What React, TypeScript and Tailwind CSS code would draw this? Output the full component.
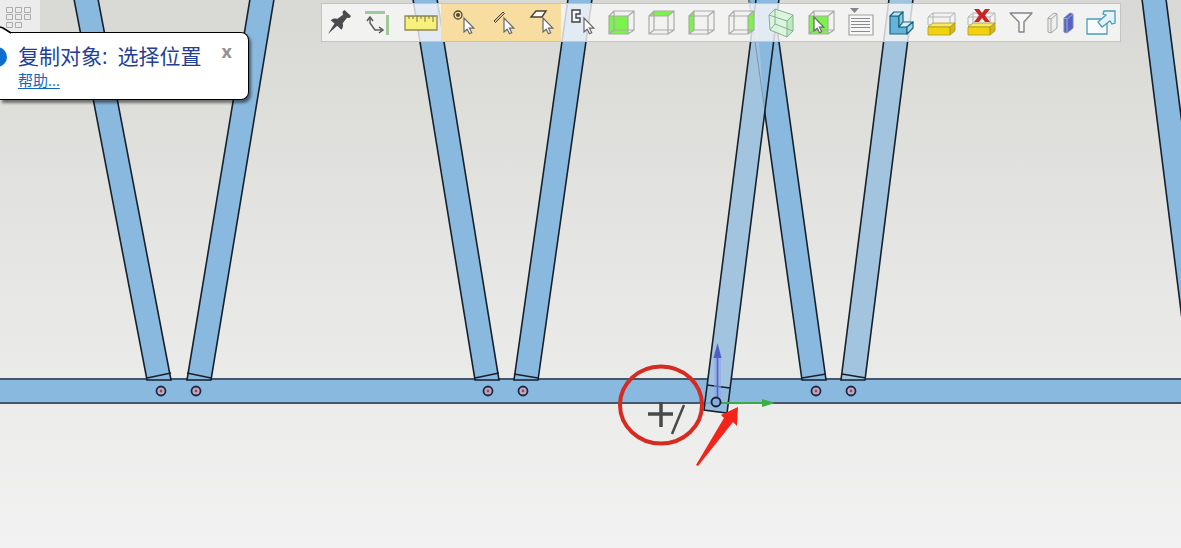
import type { ReactNode } from "react"

interface Tool {
  label: string
  icon: ReactNode
  active?: boolean
}

function Cursor({ x = 23, y = 15 }: { x?: number; y?: number }) {
  return (
    <path
      d={`M${x} ${y}v14l3.2-2.8 2.3 4.6 2.2-1.1-2.2-4.5h4.3z`}
      fill="#fdfdfd"
      stroke="#66666a"
      strokeWidth="1.2"
    />
  )
}

function Cube({ face }: { face: "front" | "top" | "left" | "right" }) {
  const faces = {
    front: "M8 13h19v18H8z",
    top: "M8 13l5-5h20l-6 5z",
    left: "M8 13l5-5v19l-5 4z",
    right: "M27 13l6-5v19l-6 4z",
  }
  return (
    <>
      <path d={faces[face]} fill="#7df24c" />
      <path
        d="M8 13h19v18H8zM13 8h20v19H13zM8 13l5-5M27 13l6-5M8 31l5-4M27 31l6-4"
        fill="none"
        stroke="#a9abaa"
        strokeWidth="1.2"
      />
    </>
  )
}

function YellowBox() {
  return (
    <>
      <path d="M7 14h22v8H7zM12 10h22v11H12zM7 14l5-4M29 14l5-4" fill="none" stroke="#b4b4b6" />
      <path d="M7 24l5-4h22l-5 4z" fill="#fbe95a" stroke="#a8992e" strokeWidth="0.8" />
      <path d="M7 24h22v8H7z" fill="#f2d20c" stroke="#a8992e" strokeWidth="0.8" />
      <path d="M29 24l5-4v8l-5 4z" fill="#d3b51a" stroke="#a8992e" strokeWidth="0.8" />
    </>
  )
}

const tools: Tool[] = [
  {
    label: "Pin toolbar",
    icon: (
      <path
        d="M7 31l6.5-10.5-3.8-3.3c2-1.6 4.4-2 6.5-1.2l5.8-4.2-.5-3L23.5 7l6.5 6-1.5 2-2.5-.2-4.3 5.500c.8 2 .3 4.6-1.3 6.5l-4.2-4z"
        fill="#4b4b4d"
      />
    ),
  },
  {
    label: "Orient axes",
    icon: (
      <>
        <path d="M4 8h20v3H4zM25 12h3v20h-3z" fill="#9ccb98" />
        <path d="M9 15v5l5 7h7" fill="none" stroke="#5f5f62" strokeWidth="1.5" strokeLinejoin="round" />
        <path d="M6 18l3-4 3 4M18 24l4 3-4 3" fill="none" stroke="#555558" strokeWidth="1.5" />
      </>
    ),
  },
  {
    label: "Measure",
    icon: (
      <>
        <path d="M4 13h32v14H4z" fill="#f8ef7c" stroke="#8e8954" strokeWidth="1.3" />
        <path d="M8 13v3M12 13v3M16 13v6M20 13v3M24 13v6M28 13v3M32 13v6" stroke="#77744a" />
      </>
    ),
  },
  {
    label: "Select points",
    active: true,
    icon: (
      <>
        <circle cx="17" cy="12" r="4" fill="none" stroke="#4d4638" strokeWidth="1.3" />
        <circle cx="17" cy="12" r="2" fill="#4d4638" />
        <Cursor />
      </>
    ),
  },
  {
    label: "Select edges",
    active: true,
    icon: (
      <>
        <path d="M13 18l9-9 1.5 1.5-9 9z" fill="#d8c08c" stroke="#4d4638" />
        <Cursor />
      </>
    ),
  },
  {
    label: "Select faces",
    active: true,
    icon: (
      <>
        <path d="M10 14l5-6h10l-4 6z" fill="#fffaf0" stroke="#45413a" strokeWidth="1.4" />
        <Cursor x={22} />
      </>
    ),
  },
  {
    label: "Select components",
    icon: (
      <>
        <path d="M11 7h8v4h-4v4h4v4h-8z" fill="#f7f7f7" stroke="#3d4146" strokeWidth="1.4" />
        <Cursor />
      </>
    ),
  },
  { label: "Front view", icon: <Cube face="front" /> },
  { label: "Top view", icon: <Cube face="top" /> },
  { label: "Left view", icon: <Cube face="left" /> },
  { label: "Right view", icon: <Cube face="right" /> },
  {
    label: "Isometric view",
    icon: (
      <>
        <path d="M8 12l6-6 18 6v16l-6 6-17-7z" fill="#d6f7d9" fillOpacity="0.85" />
        <path d="M26 18l6-6v16l-6 6z" fill="#b5eebb" />
        <path
          d="M8 12l6-6 18 6v16l-6 6-17-7zM8 12l18 6 6-6M26 18v16M14 6v15l18 7M9 27l5-6"
          fill="none"
          stroke="#92a89b"
          strokeLinejoin="round"
        />
      </>
    ),
  },
  {
    label: "View selection",
    icon: (
      <>
        <Cube face="front" />
        <Cursor x={13} y={14} />
      </>
    ),
  },
  {
    label: "Saved views",
    icon: (
      <>
        <path d="M9 5h9l-4.5 5z" fill="#868688" />
        <path d="M8 12h24v20H8z" fill="#f7f7f7" stroke="#a2a2a4" strokeWidth="1.2" />
        <path d="M10 15.5h19M10 18.5h19M10 21.5h19M10 24.5h19M10 28.5h19" stroke="#8a8a8c" />
      </>
    ),
  },
  {
    label: "Work plane",
    icon: (
      <g stroke="#216480" strokeWidth="1.2" strokeLinejoin="round">
        <path d="M9 13v18h17v-7h-8V13z" fill="#62b4d8" />
        <path d="M9 13l4-4h9l-4 4z" fill="#b9e2f2" />
        <path d="M18 13l4-4v10l-4 5z" fill="#8bcbe4" />
        <path d="M18 24l4-5h10l-6 5z" fill="#d3f0fa" />
        <path d="M26 24l6-5v6l-6 6z" fill="#9fd7ea" />
      </g>
    ),
  },
  { label: "Clip plane", icon: <YellowBox /> },
  {
    label: "Remove clip planes",
    icon: (
      <>
        <YellowBox />
        <path d="M13 6h5l3 4 3-4h5l-5 6.5 5 6.5h-5l-3-4-3 4h-5l5-6.5z" fill="#c62626" />
      </>
    ),
  },
  {
    label: "Filter",
    icon: (
      <path d="M9 10h22l-8 9v10h-5V19z" fill="#f7f7f7" stroke="#858589" strokeWidth="1.4" strokeLinejoin="round" />
    ),
  },
  {
    label: "Compare parts",
    icon: (
      <>
        <path d="M7 15l6-5 3 1v14l-6 5-3-1zM10 16v14M7 15l3 1 6-5" fill="#efefef" stroke="#a3a3a5" />
        <path d="M23 15l6-5 3 1v14l-6 5-3-1z" fill="#5663c4" stroke="#7d86b8" />
        <path d="M26 16v14M23 15l3 1 6-5" fill="none" stroke="#a5abd8" />
      </>
    ),
  },
  {
    label: "Open in new window",
    icon: (
      <g stroke="#4c9cb5" strokeWidth="1.3">
        <path d="M6 16h20v15H6z" fill="#f8fbfc" />
        <path d="M17 19l8-7-3-1 1-3h11v12l-3 1-2-3-8 6z" fill="#e4f3f7" />
      </g>
    ),
  },
]

// [top x, bottom x, cap line y at left edge, cap line y at right edge]
const members = [
  [74, 147, 378, 373],
  [250, 187, 373, 378],
  [413, 475, 378, 373],
  [568, 514, 374, 378],
  [749, 802, 378, 374],
]

const holes = [161, 196, 488, 523, 816, 851]

function Truss() {
  return (
    <svg
      className="absolute inset-0 h-full w-full"
      viewBox="0 0 1181 548"
      preserveAspectRatio="xMinYMin slice"
      aria-hidden="true"
    >
      <path d="M-5 379H1190V403H-5z" fill="#8ab9e0" />
      <path d="M0 379H1181M0 403H1181" stroke="#44576a" strokeWidth="2" />
      <g fill="#8ab9e0" stroke="#17212b" strokeWidth="1.6">
        {members.map(([top, bottom, capLeft, capRight]) => (
          <g key={top}>
            <path d={`M${top} -1L${bottom} 380h24L${top + 24} -1z`} />
            <path d={`M${bottom} ${capLeft}L${bottom + 24} ${capRight}`} />
          </g>
        ))}
        <path d="M1142 -1L1190 383V186L1166 -1z" />
      </g>

      {/* copied members, still being placed */}
      <path d="M889 -1L841 380h24L913 -1z" fill="#a2c4df" />
      <path d="M756 -1L704 410L727 413L779 -1z" fill="#a2c4df" />
      <path d="M755 -1L779 -1L765 112z" fill="#8ab9e0" />
      <path d="M749 -1L765 112" stroke="#7596ae" />
      <path d="M707 386L729 388L726 412L705 409z" fill="#92bbdf" />
      <g fill="none" stroke="#17212b" strokeWidth="1.6">
        <path d="M889 -1L841 380h24L913 -1zM842 374L866 378" />
        <path d="M756 -1L704 410L727 413L779 -1zM707 385L730 388" />
        <path d="M705 403H728" stroke="#6687a5" strokeWidth="1" />
      </g>

      <g>
        {holes.map((cx) => (
          <g key={cx}>
            <circle cx={cx} cy="391" r="4.5" fill="#c8a9c4" stroke="#172a45" strokeWidth="1.8" />
            <circle cx={cx} cy="391" r="1.4" fill="#91485f" />
          </g>
        ))}
      </g>

      {/* move handle */}
      <path d="M714 358h7v42h-7z" fill="#8fa5ec" fillOpacity="0.6" />
      <path d="M717.5 356V401" stroke="#5364c5" strokeWidth="1.6" />
      <path d="M717.5 343L721.5 358H713.5z" fill="#4d5dc2" />
      <path d="M721 403H765" stroke="#3caa48" strokeWidth="2" />
      <path d="M762 399L775 403L762 407z" fill="#3bad43" />
      <circle cx="716" cy="402" r="4.5" fill="#8dade0" stroke="#122033" strokeWidth="1.8" />

      <path d="M648 414H673M661 402V427" stroke="#47494b" strokeWidth="3.5" />
      <path d="M672 434L684 405" stroke="#47494b" strokeWidth="2.5" />
      <ellipse cx="661" cy="405" rx="41" ry="38.5" fill="none" stroke="#d62b20" strokeWidth="4" />
      <path d="M696 465L724 418L721 415L738 407L737 426L733 422L698 466z" fill="#f5241a" />
    </svg>
  )
}

function Toolbar() {
  return (
    <div
      role="toolbar"
      aria-label="View tools"
      className="mt-[3px] flex bg-[#f7f7f7]/80 outline-1 -outline-offset-1 outline-[#c3c4c4]"
    >
      {tools.map((tool) => (
        <button
          key={tool.label}
          type="button"
          aria-label={tool.label}
          className={tool.active ? "bg-[#f7dda0]" : "hover:bg-white/50"}
        >
          <svg width="40" height="39" viewBox="0 0 40 39" className="block" aria-hidden="true">
            {tool.icon}
          </svg>
        </button>
      ))}
    </div>
  )
}

function CommandHint() {
  return (
    <section className="absolute top-8 left-0 flex items-start rounded-r-lg border border-l-0 border-black bg-white pt-2 pr-4 pb-2.5 shadow-[2px_3px_3px_rgba(0,0,0,0.5)]">
      <svg className="absolute -top-2 left-0" width="12" height="9" viewBox="0 0 12 9" aria-hidden="true">
        <path d="M0 2L11 8V9H0z" fill="#fff" />
        <path d="M0 2L3 3L11 8" fill="none" stroke="#000" strokeWidth="1.5" />
      </svg>
      <svg className="mt-1.5 mr-2.5" width="8" height="20" viewBox="0 0 8 20" aria-hidden="true">
        <circle cx="-3" cy="10" r="10" fill="#0b6fd1" />
      </svg>
      <div>
        <h1 className="flex gap-2.5 text-[21px] leading-[30px] text-[#233f96]">
          <span>复制对象:</span>
          <span>选择位置</span>
        </h1>
        <a href="#help" className="block text-[15px] leading-[18px] text-[#1268bd] underline underline-offset-2">
          帮助...
        </a>
      </div>
      <button type="button" aria-label="关闭" className="ml-5 text-lg leading-5 font-bold text-[#939393]">
        x
      </button>
    </section>
  )
}

export default function App() {
  return (
    <main className="relative min-h-screen overflow-hidden bg-linear-to-b from-[#d8d9d4] via-[#e6e6e4] to-[#f2f2f2] font-['Open_Sans','Noto_Sans_CJK_SC',sans-serif]">
      <Truss />
      <header className="relative flex items-start justify-between pr-[60px]">
        <button type="button" aria-label="Menu" className="bg-[#ececec]">
          <svg width="40" height="32" viewBox="0 0 40 32" className="block" aria-hidden="true">
            <path
              d="M6.5 7.5h6v5h-6zM15.5 7.5h6v5h-6zM24.5 7.5h6v5h-6zM6.5 14.5h6v5h-6zM15.5 14.5h6v5h-6zM24.5 14.5h6v5h-6zM6.5 22.5h6v5h-6zM15.5 22.5h6v5h-6z"
              fill="none"
              stroke="#acacac"
            />
          </svg>
        </button>
        <Toolbar />
      </header>
      <CommandHint />
    </main>
  )
}
